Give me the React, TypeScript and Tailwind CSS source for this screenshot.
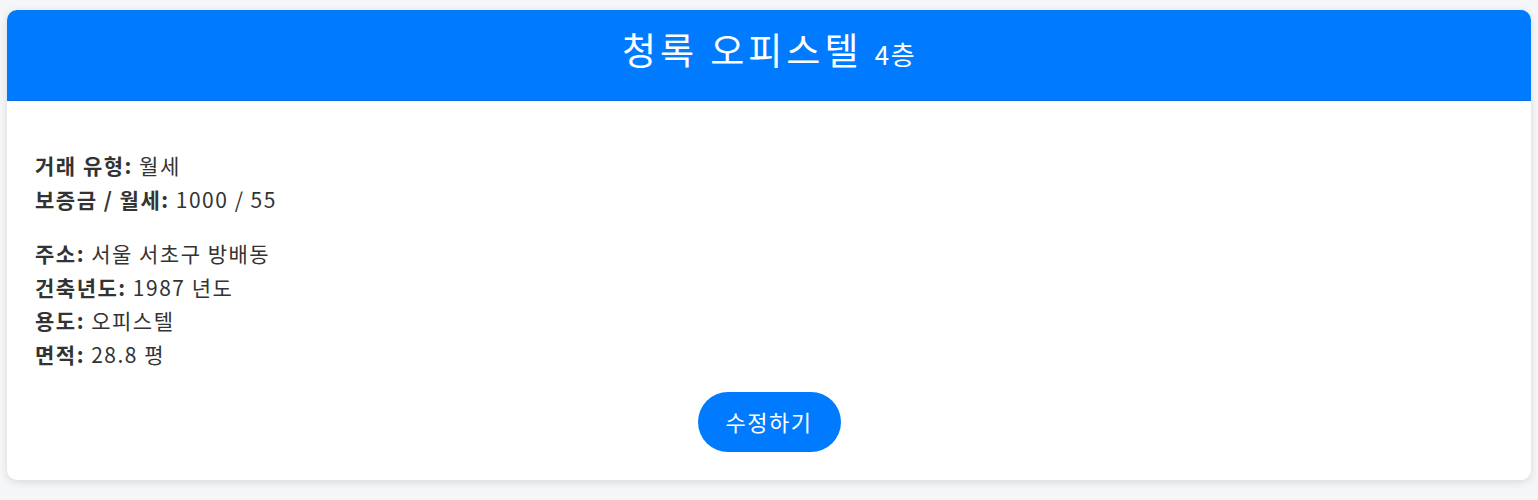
const info1 = [
  { label: '거래 유형:', value: '월세' },
  { label: '보증금 / 월세:', value: '1000 / 55' },
]

const info2 = [
  { label: '주소:', value: '서울 서초구 방배동' },
  { label: '건축년도:', value: '1987 년도' },
  { label: '용도:', value: '오피스텔' },
  { label: '면적:', value: '28.8 평' },
]

export default function App() {
  return (
    <div
      className="min-h-[500px] bg-[#f5f6f8] px-[7px] pt-[10px]"
      style={{ fontFamily: '"Noto Sans CJK KR", "Noto Sans", sans-serif' }}
    >
      <div className="overflow-hidden rounded-[10px] bg-white shadow-[0_2px_8px_rgba(0,0,0,0.12)]">
        {/* Header */}
        <div className="flex h-[91px] items-center justify-center border-b border-[#0a6fe0] bg-[#007bff] pb-[12px] text-white">
          <h1 className="text-[37px] leading-none tracking-[4px]">
            청록 오피스텔 <span className="text-[26px] tracking-[1.5px]">4층</span>
          </h1>
        </div>

        {/* Body */}
        <div className="px-[28px] pt-[48px] pb-[28px] text-[21px] leading-[33.5px] tracking-[1.5px] text-[#333]">
          <div>
            {info1.map((row) => (
              <p key={row.label}>
                <b className="font-bold">{row.label}</b> {row.value}
              </p>
            ))}
          </div>
          <div className="mt-[21px]">
            {info2.map((row) => (
              <p key={row.label}>
                <b className="font-bold">{row.label}</b> {row.value}
              </p>
            ))}
          </div>
          <div className="mt-[21px] flex justify-center">
            <button className="h-[60px] w-[143px] rounded-full bg-[#007bff] text-[22px] tracking-[1.5px] text-white">
              수정하기
            </button>
          </div>
        </div>
      </div>
    </div>
  )
}
